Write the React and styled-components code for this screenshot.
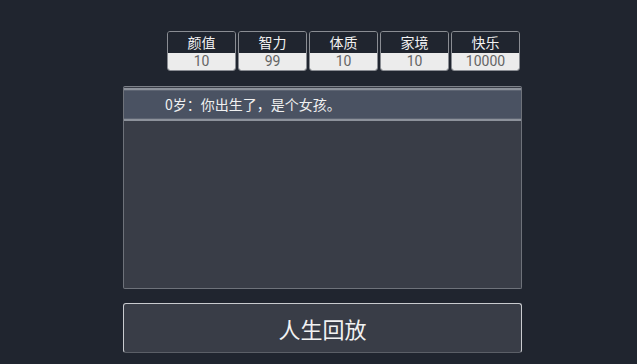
import React from "react";
import styled, { createGlobalStyle } from "styled-components";

const GlobalStyle = createGlobalStyle`
  html, body {
    margin: 0;
    padding: 0;
    background: #20252f;
  }
  body {
    font-family: "Noto Sans CJK SC", "Noto Sans", sans-serif;
    color: #f0f0f0;
  }
`;

const stats = [
  { name: "颜值", value: 10 },
  { name: "智力", value: 99 },
  { name: "体质", value: 10 },
  { name: "家境", value: 10 },
  { name: "快乐", value: 10000 },
];

function App() {
  return (
    <Page>
      <GlobalStyle />
      <Wrapper>
        <StatRow>
          {stats.map((s) => (
            <Stat key={s.name}>
              <StatName>{s.name}</StatName>
              <StatValue>{s.value}</StatValue>
            </Stat>
          ))}
        </StatRow>
        <LogPanel>
          <LogItem>0岁：你出生了，是个女孩。</LogItem>
        </LogPanel>
        <ReplayButton>人生回放</ReplayButton>
      </Wrapper>
    </Page>
  );
}

export default App;

const Page = styled.div`
  width: 637px;
  height: 364px;
  background: #20252f;
  overflow: hidden;
`;

const Wrapper = styled.div`
  width: 399px;
  margin-left: 123px;
  padding-top: 31px;
  display: flex;
  flex-direction: column;
`;

const StatRow = styled.div`
  display: flex;
  justify-content: flex-end;
  gap: 2px;
  padding-right: 2px;
`;

const Stat = styled.div`
  width: 67px;
  height: 38px;
  border: 1px solid #8a8d93;
  border-radius: 3px;
  overflow: hidden;
  display: flex;
  flex-direction: column;
`;

const StatName = styled.div`
  height: 21px;
  background: #20252f;
  color: #f2f2f2;
  font-size: 14px;
  line-height: 21px;
  text-align: center;
`;

const StatValue = styled.div`
  flex: 1;
  background: #ececec;
  color: #656565;
  font-family: "Roboto", "Noto Sans", sans-serif;
  font-size: 14px;
  line-height: 17px;
  text-align: center;
`;

const LogPanel = styled.div`
  margin-top: 15px;
  height: 203px;
  box-sizing: border-box;
  background: #393d47;
  border: 1px solid #6e727a;
  border-top-color: #7d8189;
  border-radius: 2px;
  padding-top: 1px;
`;

const LogItem = styled.div`
  height: 33px;
  box-sizing: border-box;
  background: #4a5262;
  border-top: 2px solid #8d929b;
  border-bottom: 2px solid #8d929b;
  box-shadow: inset 0 1px 0 #5d6472, inset 0 -1px 0 #5d6472;
  color: #f0f0f0;
  font-size: 14px;
  line-height: 29px;
  padding-left: 41px;
`;

const ReplayButton = styled.div`
  margin-top: 14px;
  height: 50px;
  box-sizing: border-box;
  background: #393d47;
  border: 1px solid #c9cbcf;
  border-bottom-color: #5b5f67;
  border-radius: 3px;
  color: #f2f2f2;
  font-size: 22px;
  line-height: 48px;
  text-align: center;
`;
